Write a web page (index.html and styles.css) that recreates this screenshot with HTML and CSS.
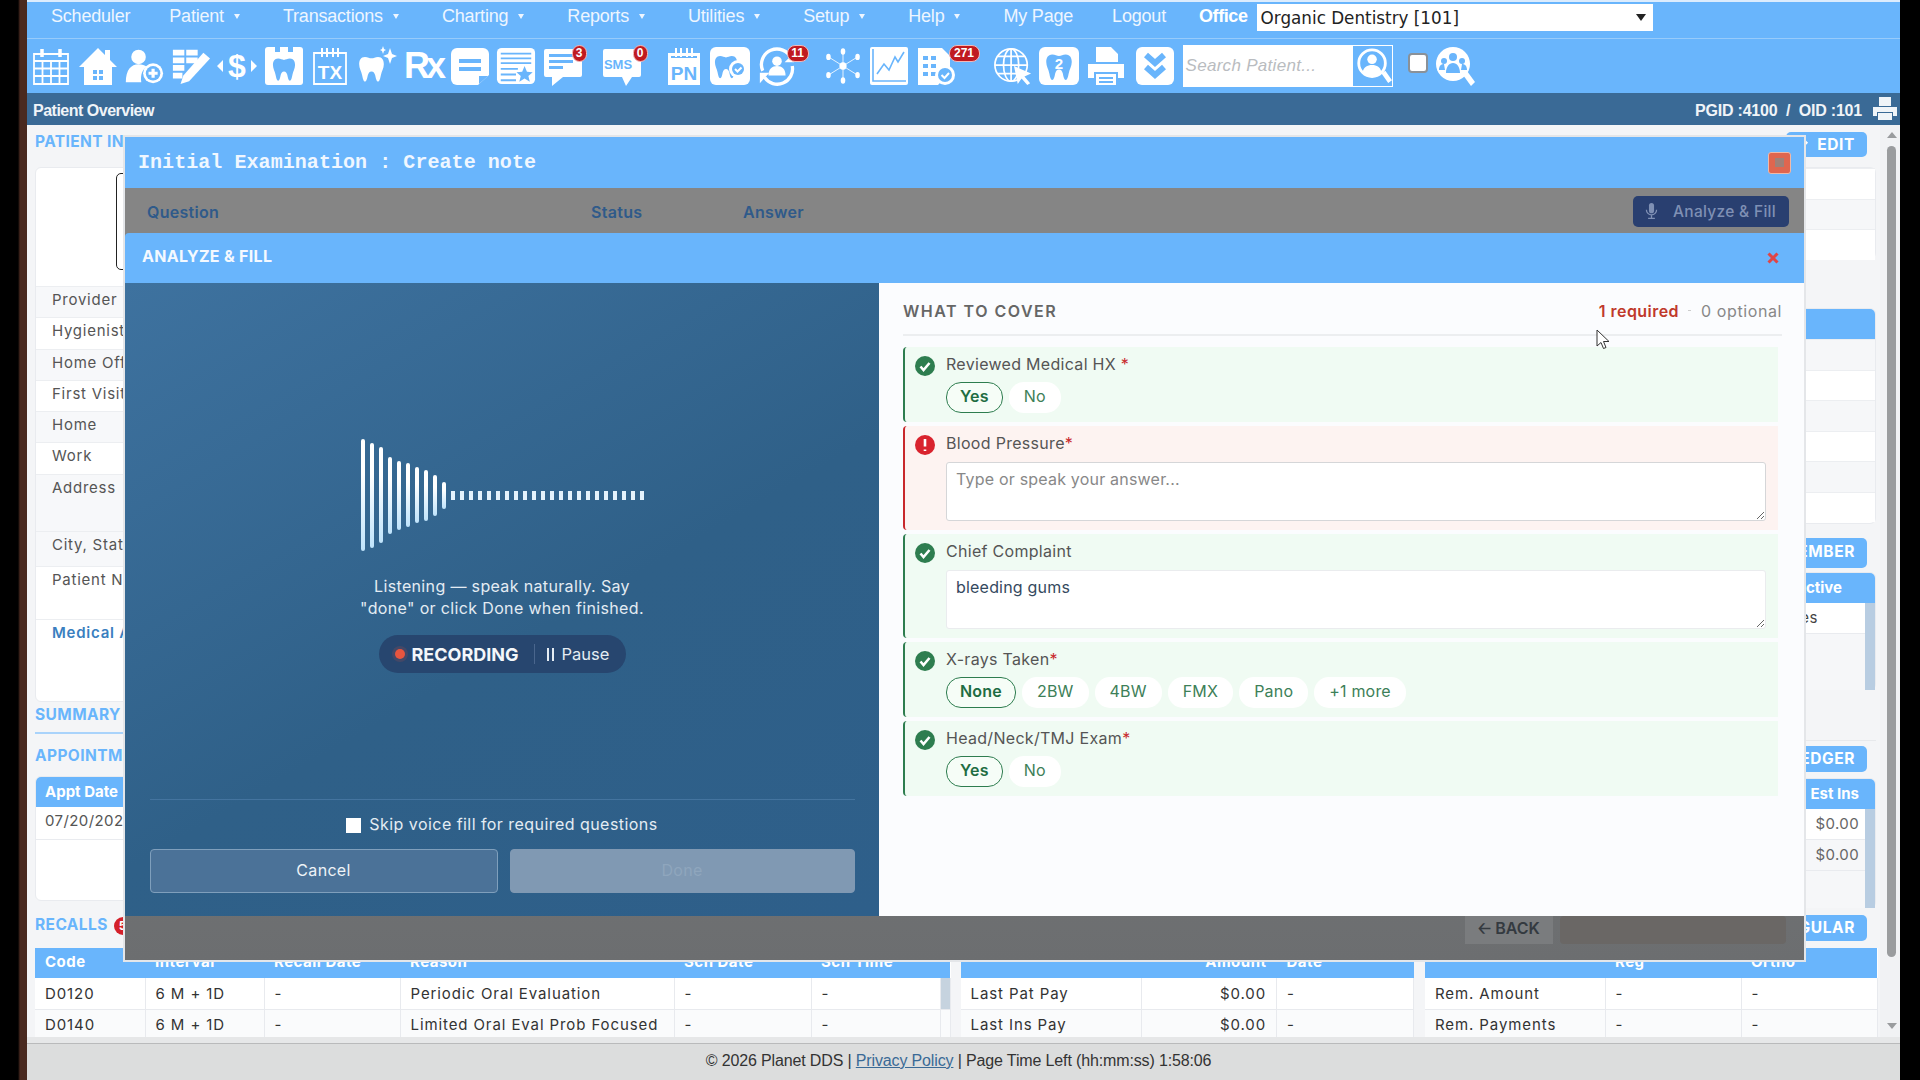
FILE: index.html
```html
<!DOCTYPE html>
<html lang="en">
<head>
    <meta charset="UTF-8">
    <title>Patient Overview</title>
    <link rel="stylesheet" href="styles.css">
</head>
<body>
<svg class="defs" width="0" height="0">
    <symbol id="tooth" viewBox="0 0 40 40"><path d="M11 4c4 0 6 2 9 2s5-2 9-2c6 0 8 5 8 10 0 6-3 9-4 15-1 5-2 9-4 9s-3-4-4-9c-1-3-2-5-5-5s-4 2-5 5c-1 5-2 9-4 9s-3-4-4-9C6 23 3 20 3 14 3 9 5 4 11 4z"/></symbol>
</svg>
<div class="frame">
    <div class="bezel"></div>
    <div class="page">
        <nav class="menu">
            <a class="menu-item">Scheduler</a>
            <a class="menu-item has-caret">Patient</a>
            <a class="menu-item has-caret">Transactions</a>
            <a class="menu-item has-caret">Charting</a>
            <a class="menu-item has-caret">Reports</a>
            <a class="menu-item has-caret">Utilities</a>
            <a class="menu-item has-caret">Setup</a>
            <a class="menu-item has-caret">Help</a>
            <a class="menu-item">My Page</a>
            <a class="menu-item">Logout</a>
            <b class="office-label">Office</b>
            <div class="office-select"><span>Organic Dentistry [101]</span><i class="select-caret"></i></div>
        </nav>

        <div class="toolbar">
            <div class="tool"><svg viewBox="0 0 40 40"><path class="ln" d="M3 8h34v30H3zM3 15h34M3 22.500h34M3 30h34M11.500 15v23M20 15v23M28.500 15v23"/><path class="ln thick" d="M11 3v8M29 3v8"/></svg></div>
            <div class="tool"><svg viewBox="0 0 40 40"><path d="M20 2l7 7V4h5v10l7 7h-5v18H6V21H1z"/><path class="cut" d="M15 24h10v10H15z"/><path class="ln-white" d="M20 24v10M15 29h10"/></svg></div>
            <div class="tool"><svg viewBox="0 0 44 40"><circle cx="16" cy="10" r="8"/><path d="M2 38c0-14 6-20 14-20 4 0 7 1 9 3-5 3-7 8-6 17z"/><circle cx="32" cy="28" r="11"/><circle class="cut" cx="32" cy="28" r="8"/><path class="ln-white thick" d="M32 23v10M27 28h10"/></svg></div>
            <div class="tool"><svg viewBox="0 0 42 40"><path d="M2 3h12v6H2zM16 3h12v6H16zM2 11h12v6H2zM16 11h12v6H16zM2 19h12v6H2zM2 27h10v6H2z"/><path d="M34 6l7 6-22 24-9 3 3-9z"/></svg></div>
            <div class="tool"><svg viewBox="0 0 40 40"><path d="M0 20l6-6v12zM40 20l-6-6v12z"/><text class="svg-bold" x="20" y="31" font-size="32" text-anchor="middle">$</text></svg></div>
            <div class="tool"><svg viewBox="0 0 40 40"><rect x="1" y="1" width="38" height="38" rx="3"/><use class="cut" href="#tooth" x="7" y="8" width="26" height="30"/><path class="cut" d="M11 1h5v5h-5zM24 1h5v5h-5z"/></svg></div>
            <div class="tool"><svg viewBox="0 0 36 40"><path class="ln" d="M2 7h32v31H2z"/><path class="ln-white" d="M10 2v9M15 2v9M21 2v9M26 2v9"/><text class="svg-bold" x="18" y="33" font-size="19" text-anchor="middle">TX</text></svg></div>
            <div class="tool"><svg viewBox="0 0 40 40"><use href="#tooth" x="0" y="6" width="29" height="33"/><path d="M33 2l2 6 5 2-5 2-2 6-2-6-5-2 5-2zM26 0l1 3 2 1-2 1-1 3-1-3-2-1 2-1z"/></svg></div>
            <div class="tool"><svg viewBox="0 0 40 40"><text class="svg-bold" x="1" y="32" font-size="36" letter-spacing="-4">Rx</text></svg></div>
            <div class="tool"><svg viewBox="0 0 40 40"><path d="M7 2h26a6 6 0 0 1 6 6v21L28 39H7a6 6 0 0 1-6-6V8a6 6 0 0 1 6-6z"/><path class="cut" d="M9 13h22v4H9zM9 21h22v4H9zM29 38v-8h9z"/></svg></div>
            <div class="tool"><svg viewBox="0 0 42 40"><rect x="1" y="1" width="40" height="38" rx="5"/><path class="cut" d="M5 6h32v2H5zM5 11h32v2H5zM5 16h32v2H5zM5 22h18v2H5zM5 28h16v2H5zM5 34h16v2H5zM30 20l2.500 6 6 .5-4.500 4 1.500 6-5.500-3.500-5.500 3.500 1.500-6-4.500-4 6-.5z"/></svg></div>
            <div class="tool gap-chat"><svg viewBox="0 0 40 40"><path d="M3 3h34a2 2 0 0 1 2 2v24a2 2 0 0 1-2 2H20l-11 9v-9H3a2 2 0 0 1-2-2V5a2 2 0 0 1 2-2z"/><path class="cut" d="M6 8h24v3H6zM6 14h24v3H6zM6 20h14v3H6z"/></svg><span class="badge">3</span></div>
            <div class="tool gap-sms"><svg viewBox="0 0 40 40"><path d="M3 3h34a2 2 0 0 1 2 2v24a2 2 0 0 1-2 2h-7l-6 9-4-9H3a2 2 0 0 1-2-2V5a2 2 0 0 1 2-2z"/><text class="svg-bold cut" x="16" y="23" font-size="13" text-anchor="middle">SMS</text></svg><span class="badge badge-sms">0</span></div>
            <div class="tool"><svg viewBox="0 0 36 40"><path d="M2 7h32v32H2z"/><path class="cut" d="M5 10h26v2H5z"/><path class="ln-white" d="M10 2v9M15 2v9M21 2v9M26 2v9"/><text class="svg-bold cut" x="18" y="34" font-size="19" text-anchor="middle">PN</text></svg></div>
            <div class="tool"><svg viewBox="0 0 40 40"><rect x="0" y="1" width="40" height="38" rx="6"/><use class="cut" href="#tooth" x="3" y="6" width="26" height="29"/><circle cx="28" cy="23" r="9"/><circle class="cut" cx="28" cy="23" r="6"/><path class="ln-white" d="M25 23l2.500 2.500 4-4"/></svg></div>
            <div class="tool gap-refresh"><svg viewBox="0 0 42 40"><path class="ln thick" d="M6 25A16 16 0 0 1 36 12M37 20a16 16 0 0 1-29 12"/><path d="M39 6v10H29zM3 38V27h10z"/><circle cx="21" cy="15" r="5"/><path d="M12 30c0-7 4-10 9-10s9 3 9 10z"/></svg><span class="badge badge-wide">11</span></div>
            <div class="tool"><svg viewBox="0 0 44 40"><path class="ln hair" d="M22 4v32M6 10l32 20M38 10L6 30"/><circle cx="22" cy="20" r="4"/><g class="node"><ellipse cx="22" cy="4" rx="2.500" ry="3.500"/><ellipse cx="22" cy="36" rx="2.500" ry="3.500"/><ellipse cx="6" cy="10" rx="2.500" ry="3.500"/><ellipse cx="38" cy="10" rx="2.500" ry="3.500"/><ellipse cx="6" cy="30" rx="2.500" ry="3.500"/><ellipse cx="38" cy="30" rx="2.500" ry="3.500"/></g></svg></div>
            <div class="tool"><svg viewBox="0 0 40 40"><rect x="1" y="1" width="38" height="38" rx="2"/><path class="ln-cut" d="M4 3v32h33M8 28l7-10 5 6 6-13 3 5 6-10"/></svg></div>
            <div class="tool gap-doc"><svg viewBox="0 0 40 40"><path d="M2 2h24l8 8v16l-12 13H2z"/><path class="cut" d="M7 10h5v4H7zM15 10h5v4h-5zM7 18h5v4H7zM15 18h5v4h-5zM7 26h5v4H7zM15 26h5v4h-5z"/><circle cx="29" cy="29" r="10"/><circle class="cut" cx="29" cy="29" r="7"/><path class="ln-white" d="M25.500 29l3 3 4.500-5"/></svg><span class="badge badge-271">271</span></div>
            <div class="tool"><svg viewBox="0 0 42 40"><circle class="ln" cx="19" cy="19" r="17"/><ellipse class="ln" cx="19" cy="19" rx="8" ry="17"/><path class="ln" d="M2 19h34M5 10h28M5 28h28M19 2v34"/><path d="M22 20l18 8-7 3 6 7-3 2-6-7-4 6z"/></svg></div>
            <div class="tool"><svg viewBox="0 0 40 40"><rect x="0" y="1" width="40" height="38" rx="6"/><use class="cut" href="#tooth" x="5" y="4" width="30" height="33"/><text class="svg-bold" x="20" y="23" font-size="15" text-anchor="middle">2</text></svg></div>
            <div class="tool gap-printer"><svg viewBox="0 0 40 40"><path d="M10 1h15l7 7v8H10zM2 18h36v14h-6v-6H8v6H2z"/><path d="M10 28h20v11H10z"/><path class="cut" d="M13 31h14v2H13zM13 35h14v2H13z"/></svg></div>
            <div class="tool gap-search"><svg viewBox="0 0 40 40"><rect x="1" y="1" width="38" height="38" rx="6"/><path class="ln-cut heavy" d="M11 9l9 8 9-8M11 21l9 8 9-8"/></svg></div>
            <div class="search-box">
                <span class="search-text">Search Patient...</span>
                <span class="search-btn"><svg viewBox="0 0 40 40"><circle class="ln-white-fat" cx="19" cy="17" r="14"/><circle cx="19" cy="13" r="5"/><path d="M9 27c1-6 5-8 10-8s9 2 10 8a14 14 0 0 1-20 0zM29 28l4-3 7 10-4 3z"/></svg></span>
            </div>
            <span class="tool-check"></span>
            <div class="tool"><svg viewBox="0 0 40 40"><circle cx="18" cy="18" r="17"/><path d="M28 29l4-4 8 11-4 4z"/><circle class="cut" cx="18" cy="11" r="4"/><circle class="cut" cx="9" cy="15" r="3"/><circle class="cut" cx="27" cy="15" r="3"/><path class="cut" d="M11 27c0-6 3-10 7-10s7 4 7 10zM4 24c0-4 2-6 5-6l1 6zM32 24c0-4-2-6-5-6l-1 6z"/></svg></div>
        </div>

        <div class="title-bar">
            <span class="title-left">Patient Overview</span>
            <span class="title-ids">PGID :4100&nbsp; / &nbsp;OID :101</span>
            <svg class="title-print" viewBox="0 0 26 24"><path d="M7 0h12v9H7zM1 10h24v9h-4v-4H5v4H1z"/><path d="M6 16h14v7H6z"/></svg>
        </div>

        <div class="workspace">
            <main class="main">
                <div class="upper">
                    <section class="col-left">
                        <h4 class="section-title first">PATIENT INFORMATION</h4>
                        <div class="card info-card">
                            <div class="photo-area"><div class="photo-box"></div></div>
                            <div class="info-row">Provider</div>
                            <div class="info-row alt">Hygienist</div>
                            <div class="info-row">Home Office</div>
                            <div class="info-row alt">First Visit</div>
                            <div class="info-row">Home</div>
                            <div class="info-row alt">Work</div>
                            <div class="info-row addr">Address</div>
                            <div class="info-row city">City, State</div>
                            <div class="info-row alt notes">Patient Notes</div>
                            <div class="info-row notes blue-label">Medical Alerts</div>
                        </div>
                        <h4 class="section-title summary">SUMMARY</h4>
                        <h4 class="section-title appts">APPOINTMENTS</h4>
                        <div class="card appt-card">
                            <div class="card-head">Appt Date</div>
                            <div class="appt-row">07/20/2025</div>
                        </div>
                        <h4 class="section-title recalls">RECALLS <span class="count-dot">5</span></h4>
                    </section>

                    <section class="col-right">
                        <div class="btn-row"><span class="blue-btn edit-btn"><svg viewBox="0 0 12 12"><path d="M1 11l1-4 6-6 3 3-6 6z"/></svg>EDIT</span></div>
                        <div class="card stripes small-stripes">
                            <div></div><div></div><div></div>
                        </div>
                        <div class="card stripes big-stripes">
                            <div class="card-head"></div>
                            <div></div><div></div><div></div><div></div><div></div><div></div>
                        </div>
                        <div class="btn-row member-row"><span class="blue-btn">ADD MEMBER</span></div>
                        <div class="card active-card">
                            <div class="card-head head-right">Active</div>
                            <div class="scroll-body">
                                <div class="scroll-content"><div class="active-row">Notes</div></div>
                                <div class="mini-scroll"></div>
                            </div>
                        </div>
                        <div class="btn-row ledger-row"><span class="blue-btn ledger-btn">LEDGER</span></div>
                        <div class="card est-card">
                            <div class="card-head head-right short">Est Ins</div>
                            <div class="scroll-body">
                                <div class="scroll-content">
                                    <div class="money-row">$0.00</div>
                                    <div class="money-row alt">$0.00</div>
                                </div>
                                <div class="mini-scroll"></div>
                            </div>
                        </div>
                        <div class="btn-row regular-row"><span class="blue-btn ledger-btn">REGULAR</span></div>
                    </section>
                </div>

                <div class="tables">
                    <table class="data-table recalls-table">
                        <colgroup><col class="c110"><col class="c119"><col class="c136"><col class="c274"><col class="c137"><col class="c129"><col class="c10"></colgroup>
                        <tr><th>Code</th><th>Interval</th><th>Recall Date</th><th>Reason</th><th>Sch Date</th><th>Sch Time</th><th></th></tr>
                        <tr><td>D0120</td><td>6 M + 1D</td><td>-</td><td>Periodic Oral Evaluation</td><td>-</td><td>-</td><td class="scroll-cell"></td></tr>
                        <tr class="alt"><td>D0140</td><td>6 M + 1D</td><td>-</td><td>Limited Oral Eval Prob Focused</td><td>-</td><td>-</td><td class="scroll-cell"></td></tr>
                    </table>
                    <table class="data-table pay-table">
                        <colgroup><col class="c181"><col class="c135"><col class="c137"></colgroup>
                        <tr><th></th><th class="num">Amount</th><th>Date</th></tr>
                        <tr><td>Last Pat Pay</td><td class="num">$0.00</td><td>-</td></tr>
                        <tr class="alt"><td>Last Ins Pay</td><td class="num">$0.00</td><td>-</td></tr>
                    </table>
                    <table class="data-table rem-table">
                        <colgroup><col class="c180"><col class="c136"><col class="c136"></colgroup>
                        <tr><th></th><th>Reg</th><th>Ortho</th></tr>
                        <tr><td>Rem. Amount</td><td>-</td><td>-</td></tr>
                        <tr class="alt"><td>Rem. Payments</td><td>-</td><td>-</td></tr>
                    </table>
                </div>
            </main>
            <div class="page-scroll">
                <span class="arrow-up"></span>
                <span class="page-thumb"></span>
                <span class="arrow-down"></span>
            </div>
        </div>

        <div class="foot-gap"></div>
        <footer class="footer">© 2026 Planet DDS | <a class="footer-link">Privacy Policy</a> | Page Time Left (hh:mm:ss) 1:58:06</footer>

        <!-- note dialog, sits over the overview -->
        <div class="note-modal">
            <div class="note-head">
                <span class="note-title">Initial Examination : Create note</span>
                <span class="note-close"><i></i></span>
            </div>
            <div class="note-band">
                <span class="band-question">Question</span>
                <span class="band-status">Status</span>
                <span class="band-answer">Answer</span>
                <span class="analyze-btn">
                    <svg viewBox="0 0 20 20"><path d="M7 3a3 3 0 0 1 6 0v6a3 3 0 0 1-6 0z"/><path class="mic-line" d="M4 8a6 6 0 0 0 12 0M10 14v4M6 18h8"/></svg>
                    Analyze &amp; Fill
                </span>
            </div>

            <div class="fill-modal">
                <div class="fill-head">
                    <span>ANALYZE &amp; FILL</span>
                    <svg class="fill-close" viewBox="0 0 12 12"><path d="M1.500 1.500l9 9M10.500 1.500l-9 9"/></svg>
                </div>
                <div class="fill-body">
                    <div class="voice-panel">
                        <div class="wave">
                            <i style="height:112px"></i><i style="height:105px"></i><i style="height:96px"></i><i style="height:77px"></i><i style="height:69px"></i><i style="height:64px"></i><i style="height:56px"></i><i style="height:51px"></i><i style="height:41px"></i><i style="height:27px"></i>
                            <i class="dot"></i><i class="dot"></i><i class="dot"></i><i class="dot"></i><i class="dot"></i><i class="dot"></i><i class="dot"></i><i class="dot"></i><i class="dot"></i><i class="dot"></i><i class="dot"></i><i class="dot"></i><i class="dot"></i><i class="dot"></i><i class="dot"></i><i class="dot"></i><i class="dot"></i><i class="dot"></i><i class="dot"></i><i class="dot"></i><i class="dot"></i><i class="dot"></i>
                        </div>
                        <p class="voice-hint">Listening — speak naturally. Say<br>"done" or click Done when finished.</p>
                        <div class="rec-pill">
                            <i class="rec-dot"></i>
                            <b class="rec-label">RECORDING</b>
                            <i class="rec-sep"></i>
                            <i class="pause-icon"></i>
                            <span>Pause</span>
                        </div>
                        <div class="voice-foot">
                            <label class="skip-row"><i class="skip-box"></i>Skip voice fill for required questions</label>
                            <div class="voice-btns">
                                <button class="btn-cancel">Cancel</button>
                                <button class="btn-done">Done</button>
                            </div>
                        </div>
                    </div>

                    <div class="cover-panel">
                        <div class="cover-head">
                            <h3>WHAT TO COVER</h3>
                            <span class="need">1 required</span>
                            <span class="cover-sep"></span>
                            <span class="opt">0 optional</span>
                        </div>

                        <div class="q-item">
                            <svg class="q-icon ok" viewBox="0 0 20 20"><circle cx="10" cy="10" r="10"/><path d="M5.500 10.500l3 3.500 6-7"/></svg>
                            <div class="q-main">
                                <div class="q-label">Reviewed Medical HX <em>*</em></div>
                                <div class="pills"><span class="pill on">Yes</span><span class="pill">No</span></div>
                            </div>
                        </div>
                        <div class="q-item bad">
                            <svg class="q-icon err" viewBox="0 0 20 20"><circle cx="10" cy="10" r="10"/><path d="M10 4v7.500M10 14.500v1.500"/></svg>
                            <div class="q-main">
                                <div class="q-label">Blood Pressure<em>*</em></div>
                                <textarea class="q-text bad-text" placeholder="Type or speak your answer..."></textarea>
                            </div>
                        </div>
                        <div class="q-item">
                            <svg class="q-icon ok" viewBox="0 0 20 20"><circle cx="10" cy="10" r="10"/><path d="M5.500 10.500l3 3.500 6-7"/></svg>
                            <div class="q-main">
                                <div class="q-label">Chief Complaint</div>
                                <textarea class="q-text">bleeding gums</textarea>
                            </div>
                        </div>
                        <div class="q-item">
                            <svg class="q-icon ok" viewBox="0 0 20 20"><circle cx="10" cy="10" r="10"/><path d="M5.500 10.500l3 3.500 6-7"/></svg>
                            <div class="q-main">
                                <div class="q-label">X-rays Taken<em>*</em></div>
                                <div class="pills"><span class="pill on">None</span><span class="pill">2BW</span><span class="pill">4BW</span><span class="pill">FMX</span><span class="pill">Pano</span><span class="pill">+1 more</span></div>
                            </div>
                        </div>
                        <div class="q-item">
                            <svg class="q-icon ok" viewBox="0 0 20 20"><circle cx="10" cy="10" r="10"/><path d="M5.500 10.500l3 3.500 6-7"/></svg>
                            <div class="q-main">
                                <div class="q-label">Head/Neck/TMJ Exam<em>*</em></div>
                                <div class="pills"><span class="pill on">Yes</span><span class="pill">No</span></div>
                            </div>
                        </div>
                    </div>
                </div>
            </div>

            <div class="note-foot">
                <span class="back-btn">🡠 BACK</span>
                <span class="complete-btn"></span>
            </div>

            <svg class="cursor" viewBox="0 0 14 21"><path d="M1 1v16l4-3.500 2.500 6 2.500-1-2.500-6H13z"/></svg>
        </div>
    </div>
</div>
</body>
</html>
```

FILE: styles.css
```css
* {
    box-sizing: border-box;
}
html, body {
    margin: 0;
    padding: 0;
    height: 1080px;
    overflow: hidden;
    background: #000;
}
body {
    font-family: Inter, "Open Sans", sans-serif;
    color: #444;
}
.defs {
    position: absolute;
}
.frame {
    display: flex;
    height: 1080px;
}
.bezel {
    width: 27px;
    background: linear-gradient(to right, #000 18px, #4a2a20 20px, #4a2a20 27px);
}
.page {
    position: relative;
    width: 1873px;
    height: 1080px;
    overflow: hidden;
    background: #f4f5f7;
}

/* top menu */
.menu {
    display: flex;
    align-items: center;
    height: 39px;
    padding: 0 0 0 24px;
    background: #69b5fc;
    border-top: 2px solid #dcecfd;
    border-bottom: 1px solid #97cbfb;
    font-family: "Liberation Sans", Arial, sans-serif;
}
.menu-item {
    margin-right: 39px;
    padding-bottom: 8px;
    font-size: 18px;
    color: #eef6ff;
    letter-spacing: -0.2px;
}
.has-caret {
    margin-right: 43px;
}
.has-caret::after {
    content: "";
    display: inline-block;
    margin-left: 10px;
    vertical-align: 3px;
    border-left: 3px solid transparent;
    border-right: 3px solid transparent;
    border-top: 5px solid #eef6ff;
}
.office-label {
    margin-left: -6px;
    margin-right: 9px;
    padding-bottom: 8px;
    font-size: 18px;
    color: #fff;
    letter-spacing: -0.4px;
}
.office-select {
    display: flex;
    align-items: center;
    justify-content: space-between;
    width: 396px;
    height: 27px;
    margin-bottom: 5px;
    padding: 0 7px 0 4px;
    background: #fff;
    font-family: "DejaVu Sans", sans-serif;
    font-size: 16.800px;
    color: #222;
}
.select-caret {
    border-left: 5px solid transparent;
    border-right: 5px solid transparent;
    border-top: 7px solid #222;
}

/* icon toolbar */
.toolbar {
    display: flex;
    align-items: center;
    height: 54px;
    padding-left: 4px;
    background: #69b5fc;
}
.tool {
    position: relative;
    flex: none;
    width: 40px;
    height: 40px;
    margin-right: 6.500px;
}
.tool svg {
    display: block;
    width: 40px;
    height: 40px;
    fill: #fff;
    overflow: visible;
}
.cut {
    fill: #69b5fc;
}
.ln {
    fill: none;
    stroke: #fff;
    stroke-width: 1.800;
}
.hair {
    stroke-width: 0.900;
}
.ln-white {
    fill: none;
    stroke: #fff;
    stroke-width: 2;
}
.ln-cut {
    fill: none;
    stroke: #69b5fc;
    stroke-width: 1.600;
}
.heavy {
    stroke-width: 6;
}
.thick {
    stroke-width: 3.500;
}
.ln-white-fat {
    fill: none;
    stroke: #fff;
    stroke-width: 3;
}
.svg-bold {
    font-family: "Liberation Sans", Arial, sans-serif;
    font-weight: bold;
}
.gap-chat {
    margin-right: 19px;
}
.gap-sms {
    margin-right: 22px;
}
.gap-refresh {
    margin-right: 26px;
}
.gap-doc {
    margin-right: 37px;
}
.gap-printer {
    margin-right: 9px;
}
.gap-search {
    margin-right: 8px;
}
.badge {
    position: absolute;
    top: -1px;
    right: -4px;
    min-width: 15px;
    height: 17px;
    padding: 0 2px;
    border-radius: 8px;
    background: #c01a20;
    border: 1px solid #f2b8b8;
    font-family: "Liberation Sans", Arial, sans-serif;
    font-size: 12px;
    font-weight: bold;
    line-height: 15px;
    text-align: center;
    color: #fff;
}
.badge-sms {
    right: -6px;
}
.badge-wide {
    right: -12px;
    min-width: 22px;
}
.badge-271 {
    right: -24px;
    min-width: 31px;
}
.search-box {
    display: flex;
    flex: none;
    justify-content: space-between;
    align-items: center;
    width: 210px;
    height: 42px;
    padding-left: 3px;
    background: #fff;
}
.search-text {
    font-family: "Liberation Sans", Arial, sans-serif;
    font-size: 17px;
    font-style: italic;
    color: #b9bcc0;
    letter-spacing: 0.3px;
}
.search-btn {
    width: 41px;
    height: 42px;
    background: #69b5fc;
    border: 1px solid #fff;
    padding: 1px;
}
.search-btn svg {
    display: block;
    width: 38px;
    height: 38px;
    fill: #fff;
}
.tool-check {
    flex: none;
    width: 20px;
    height: 20px;
    margin: 0 7px 6px 15px;
    background: #fff;
    border: 2px solid #8a9198;
    border-radius: 4px;
}

/* dark title bar */
.title-bar {
    display: flex;
    align-items: center;
    height: 32px;
    padding: 3px 0 0 6px;
    background: #3a6a96;
    font-family: "Liberation Sans", Arial, sans-serif;
    font-size: 16px;
    font-weight: bold;
    color: #f0f4f8;
}
.title-left {
    letter-spacing: -0.5px;
}
.title-ids {
    margin-left: auto;
    letter-spacing: -0.2px;
}
.title-print {
    width: 26px;
    height: 24px;
    margin: -3px 2px 0 10px;
    fill: #f0f4f8;
}

/* overview behind the dialog */
.workspace {
    display: flex;
    height: 912px;
}
.main {
    width: 1853px;
    height: 912px;
    padding: 0 4px 0 8px;
    overflow: hidden;
}
.upper {
    display: flex;
    justify-content: space-between;
    height: 823px;
}
.col-left {
    width: 420px;
}
.col-right {
    width: 300px;
}
.section-title {
    margin: 0;
    font-size: 15.500px;
    font-weight: 700;
    line-height: 24px;
    color: #69b5fc;
    letter-spacing: 0.4px;
}
.first {
    padding-top: 5px;
    height: 42px;
}
.card {
    background: #fff;
    border: 1px solid #e9ebef;
    border-radius: 6px;
}
.info-card {
    height: 535px;
}
.photo-area {
    height: 118px;
    padding: 5px 0 0 80px;
}
.photo-box {
    width: 200px;
    height: 97px;
    border: 1px solid #222;
    border-radius: 5px;
}
.info-row {
    height: 31.300px;
    padding-left: 16px;
    border-top: 1px solid #eceef1;
    font-size: 15px;
    line-height: 25px;
    letter-spacing: 0.75px;
    color: #555;
    background: #f7f8fa;
}
.info-row.alt {
    background: #fff;
}
.info-row.addr {
    height: 57px;
}
.info-row.city {
    height: 35px;
}
.info-row.notes {
    height: 53px;
}
.blue-label {
    font-weight: 600;
    color: #3a7fc0;
    background: #fff;
}
.summary {
    height: 31px;
    line-height: 24px;
    border-bottom: 2px solid #a9d3fb;
    padding-bottom: 5px;
    margin-top: 1px;
}
.appts {
    margin-top: 10px;
    height: 25px;
    margin-bottom: 7px;
}
.appt-card {
    height: 125px;
}
.card-head {
    height: 30px;
    padding-left: 9px;
    background: #69b5fc;
    border-radius: 5px 5px 0 0;
    font-size: 15px;
    font-weight: 700;
    line-height: 29px;
    color: #fff;
}
.appt-row {
    height: 33px;
    padding-left: 9px;
    font-size: 15px;
    line-height: 28px;
    letter-spacing: 0.4px;
    color: #555;
    border-bottom: 1px solid #e9ebef;
}
.recalls {
    margin-top: 12px;
}
.count-dot {
    display: inline-block;
    width: 18px;
    height: 18px;
    margin-left: 2px;
    border-radius: 50%;
    background: #d4202a;
    font-size: 12px;
    line-height: 18px;
    text-align: center;
    color: #fff;
}

.btn-row {
    display: flex;
    justify-content: flex-end;
    padding-right: 9px;
}
.btn-row:first-child {
    height: 42px;
    padding-top: 7px;
}
.blue-btn {
    height: 25px;
    padding: 0 12px;
    background: #69b5fc;
    border-radius: 5px;
    font-size: 15.500px;
    font-weight: 700;
    line-height: 24px;
    letter-spacing: 0.6px;
    color: #fff;
}
.edit-btn {
    display: flex;
    align-items: center;
    gap: 8px;
    padding-left: 12px;
}
.edit-btn svg {
    width: 11px;
    height: 11px;
    fill: #fff;
}
.stripes > div:not(.card-head) {
    height: 30.500px;
    background: #fff;
    border-top: 1px solid #eceef1;
}
.stripes > div:nth-child(even):not(.card-head) {
    background: #f6f7f9;
}
.small-stripes {
    height: 92px;
    border-bottom: 1px solid #e9ebef;
}
.big-stripes {
    height: 216px;
    margin-top: 49px;
}
.member-row {
    height: 30px;
    margin-top: 14px;
}
.member-row .blue-btn {
    height: 30px;
    line-height: 28px;
}
.active-card {
    height: 118px;
    margin-top: 4px;
}
.head-right {
    padding: 0 33px 0 0;
    text-align: right;
}
.head-right.short {
    padding-right: 16px;
}
.scroll-body {
    display: flex;
    height: 87px;
}
.scroll-content {
    flex: 1;
    background: #f6f7f9;
}
.mini-scroll {
    width: 10px;
    background: #b8cde2;
}
.active-row {
    height: 31px;
    padding-right: 47px;
    background: #fff;
    border-bottom: 1px solid #e9ebef;
    font-size: 15px;
    line-height: 29px;
    letter-spacing: 0.5px;
    text-align: right;
    color: #444;
}
.ledger-row {
    margin-top: 50px;
    border-top: 1px solid #e7e9ec;
    height: 37px;
    align-items: flex-end;
    padding-bottom: 5px;
}
.ledger-btn {
    height: 26px;
    line-height: 26px;
}
.est-card {
    height: 130px;
    margin-top: 1px;
}
.est-card .scroll-body {
    height: 99px;
}
.money-row {
    height: 31px;
    padding-right: 6px;
    background: #fff;
    border-bottom: 1px solid #e9ebef;
    font-size: 15px;
    line-height: 29px;
    letter-spacing: 0.4px;
    text-align: right;
    color: #666;
}
.money-row.alt {
    background: #f6f7f9;
}
.regular-row {
    margin-top: 7px;
}

/* bottom tables */
.tables {
    display: flex;
    gap: 10px;
}
.data-table {
    table-layout: fixed;
    border-collapse: collapse;
    background: #fff;
    font-size: 15px;
    letter-spacing: 0.9px;
    color: #333;
}
.recalls-table {
    width: 915px;
}
.pay-table {
    width: 453px;
}
.rem-table {
    width: 452px;
    margin-left: 1px;
}
.c10 { width: 10px; }
.c110 { width: 110px; }
.c119 { width: 119px; }
.c129 { width: 129px; }
.c135 { width: 135px; }
.c136 { width: 136px; }
.c137 { width: 137px; }
.c180 { width: 180px; }
.c181 { width: 181px; }
.c274 { width: 274px; }
.data-table th {
    height: 30px;
    padding: 0 10px 4px;
    background: #69b5fc;
    font-weight: 700;
    text-align: left;
    letter-spacing: 0.5px;
    color: #fff;
}
.data-table td {
    height: 31px;
    padding: 0 10px;
    border-right: 1px solid #e8eaee;
    border-bottom: 1px solid #e8eaee;
    white-space: nowrap;
}
.data-table .alt td {
    background: #fafbfc;
}
.data-table .num {
    text-align: right;
}
.data-table .scroll-cell {
    padding: 0;
    background: #c6d3df;
}

.page-scroll {
    position: relative;
    width: 20px;
    background: #f1f2f4;
}
.page-thumb {
    position: absolute;
    left: 7px;
    top: 21px;
    width: 9px;
    height: 811px;
    border-radius: 5px;
    background: #9a9c9e;
}
.arrow-up {
    position: absolute;
    left: 7px;
    top: 7px;
    border-left: 5px solid transparent;
    border-right: 5px solid transparent;
    border-bottom: 6px solid #9a9c9e;
}
.arrow-down {
    position: absolute;
    left: 7px;
    bottom: 8px;
    border-left: 5px solid transparent;
    border-right: 5px solid transparent;
    border-top: 6px solid #9a9c9e;
}
.foot-gap {
    height: 7px;
    background: #e6e7e8;
    border-bottom: 1px solid #b9babb;
}
.footer {
    height: 36px;
    padding-right: 10px;
    background: #dcdddd;
    font-family: "Liberation Sans", Arial, sans-serif;
    font-size: 16px;
    line-height: 34px;
    letter-spacing: -0.14px;
    text-align: center;
    color: #333;
}
.footer-link {
    color: #3a6a96;
    text-decoration: underline;
}

/* note dialog */
.note-modal {
    position: absolute;
    left: 96px;
    top: 135px;
    width: 1683px;
    height: 827px;
    border: 2px solid #e4e6e9;
    background: linear-gradient(to bottom, #868686, #6c6e70);
}
.note-head {
    display: flex;
    align-items: center;
    justify-content: space-between;
    height: 51px;
    padding: 0 13px 0 13px;
    background: #69b5fc;
}
.note-title {
    font-family: "Liberation Mono", monospace;
    font-size: 20px;
    font-weight: bold;
    letter-spacing: 0.06px;
    color: #f0f7ff;
}
.note-close {
    display: flex;
    align-items: center;
    justify-content: center;
    width: 23px;
    height: 22px;
    background: #e0664f;
    border: 1px solid #f0b9a8;
    border-radius: 3px;
}
.note-close i {
    width: 9px;
    height: 9px;
    background: #a08078;
}
.note-band {
    position: relative;
    display: flex;
    align-items: center;
    height: 45px;
    padding: 2px 0 0 22px;
    background: #858585;
    font-size: 16px;
    font-weight: 600;
    color: #2f5a8a;
    letter-spacing: 0.3px;
}
.band-question {
    width: 444px;
}
.band-status {
    width: 152px;
}
.analyze-btn {
    display: flex;
    align-items: center;
    gap: 13px;
    height: 31px;
    margin-left: auto;
    margin-right: 15px;
    padding: 0 8px 0 10px;
    width: 156px;
    background: #293f70;
    border-radius: 5px;
    font-size: 15.500px;
    font-weight: 500;
    white-space: nowrap;
    color: #7f90b4;
}
.analyze-btn svg {
    flex: none;
    width: 17px;
    height: 17px;
    fill: #7f90b4;
}
.mic-line {
    fill: none;
    stroke: #7f90b4;
    stroke-width: 1.500;
}

.fill-modal {
    height: 683px;
}
.fill-head {
    display: flex;
    align-items: center;
    justify-content: space-between;
    height: 50px;
    padding: 0 25px 4px 17px;
    background: #69b5fc;
    border-radius: 4px 0 0 0;
    font-size: 16px;
    font-weight: 700;
    letter-spacing: 0.3px;
    color: #f4f9ff;
}
.fill-close {
    width: 12px;
    height: 12px;
    margin-top: 4px;
    fill: none;
    stroke: #e04545;
    stroke-width: 3;
}
.fill-body {
    display: flex;
    height: 633px;
}
.voice-panel {
    display: flex;
    flex-direction: column;
    align-items: center;
    width: 754px;
    padding-top: 156px;
    background: linear-gradient(150deg, #3e729f 0%, #2f6088 55%, #2e5f8a 100%);
}
.wave {
    display: flex;
    align-items: center;
    gap: 5px;
    height: 112px;
}
.wave i {
    width: 4px;
    border-radius: 2px;
    background: linear-gradient(to bottom, #fff 30%, #bfe3fb);
}
.wave .dot {
    height: 9px;
    border-radius: 0;
    background: #e4f2fc;
}
.voice-hint {
    margin: 24px 0 0;
    font-size: 16px;
    line-height: 22px;
    letter-spacing: 0.35px;
    text-align: center;
    color: #e4ecf3;
}
.rec-pill {
    display: flex;
    align-items: center;
    width: 247px;
    height: 38px;
    margin-top: 16px;
    padding-left: 16px;
    background: #27466f;
    border-radius: 19px;
    font-size: 16.500px;
    color: #e4ecf3;
}
.rec-dot {
    width: 10px;
    height: 10px;
    margin-right: 7px;
    border-radius: 50%;
    background: #e8553f;
    box-shadow: 0 0 0 3px rgba(232, 85, 63, 0.15);
}
.rec-label {
    width: 121px;
    font-size: 18px;
    font-weight: 700;
    color: #f4f7fa;
    white-space: nowrap;
}
.rec-sep {
    width: 1px;
    height: 20px;
    margin: 0 12px 0 1px;
    background: #4a668d;
}
.pause-icon {
    width: 7px;
    height: 13px;
    margin-right: 8px;
    border-left: 2px solid #e4ecf3;
    border-right: 2px solid #e4ecf3;
}
.voice-foot {
    width: 705px;
    margin-top: auto;
    padding-bottom: 23px;
    border-top: 1px solid #44749f;
}
.skip-row {
    display: flex;
    align-items: center;
    justify-content: center;
    height: 24px;
    margin: 12px 0 13px;
    font-size: 16px;
    letter-spacing: 0.45px;
    color: #e4ecf3;
}
.skip-box {
    width: 15px;
    height: 15px;
    margin: 3px 8px 0 0;
    background: #fff;
}
.voice-btns {
    display: flex;
    justify-content: space-between;
}
.voice-btns button {
    height: 44px;
    padding: 0 0 2px;
    border-radius: 4px;
    font-family: inherit;
    font-size: 16px;
    letter-spacing: 0.3px;
}
.btn-cancel {
    width: 348px;
    background: #4b7298;
    border: 1px solid #7f9fbc;
    color: #eef3f7;
}
.btn-done {
    width: 345px;
    background: #8099b3;
    border: 1px solid #8099b3;
    color: #8fa6bd;
}

.cover-panel {
    flex: 1;
    padding: 14px 22px 0 24px;
    background: #fbfcfe;
}
.cover-head {
    display: flex;
    align-items: center;
    height: 39px;
    margin-bottom: 11px;
    padding-bottom: 10px;
    border-bottom: 2px solid #eceef0;
    font-size: 16px;
    letter-spacing: 0.45px;
}
.cover-head h3 {
    margin: 0 auto 0 0;
    font-size: 16px;
    font-weight: 600;
    letter-spacing: 1.5px;
    color: #666;
}
.need {
    font-weight: 600;
    color: #c0392b;
}
.cover-sep {
    width: 3px;
    height: 1px;
    margin: 0 10px 0 9px;
    background: #ccc;
}
.opt {
    letter-spacing: 0.6px;
    color: #888;
}
.q-item {
    display: flex;
    gap: 11px;
    margin: 0 4px 4px 0;
    padding: 6px 12px 9px 10px;
    background: #f0fbf3;
    border-left: 2px solid #2e7d4f;
    border-radius: 4px 0 0 4px;
}
.q-item.bad {
    background: #fdf3f1;
    border-left-color: #c8282c;
}
.q-icon {
    flex: none;
    width: 20px;
    height: 20px;
    margin-top: 3px;
    stroke: #fff;
    fill: none;
}
.q-icon circle {
    stroke: none;
}
.q-icon path {
    fill: none;
    stroke: #fff;
    stroke-width: 2.600;
}
.q-icon.ok circle {
    fill: #2e7d4f;
}
.q-icon.err circle {
    fill: #d9232e;
}
.q-main {
    flex: 1;
}
.q-label {
    height: 22px;
    font-size: 16px;
    line-height: 22px;
    letter-spacing: 0.3px;
    color: #555;
}
.q-label em {
    font-style: normal;
    color: #c8282c;
}
.pills {
    display: flex;
    gap: 6px;
    margin-top: 7px;
}
.pill {
    height: 31px;
    padding: 0 15px;
    background: #fff;
    border-radius: 15px;
    font-size: 16px;
    line-height: 28px;
    letter-spacing: 0.2px;
    color: #3d8058;
}
.pill.on {
    padding: 0 13px;
    border: 1.500px solid #2e7d4f;
    background: #f6fdf7;
    font-weight: 600;
    line-height: 26px;
    color: #1f6d43;
}
.q-text {
    display: block;
    width: 100%;
    height: 59px;
    margin-top: 8px;
    padding: 6px 9px;
    background: #fff;
    border: 1px solid #eaecee;
    border-radius: 3px;
    outline: none;
    font-family: inherit;
    font-size: 16px;
    letter-spacing: 0.2px;
    color: #34495e;
}
.bad-text {
    border-color: #d5d6d8;
}
.q-text::placeholder {
    color: #888;
}
.note-foot {
    display: flex;
    justify-content: flex-end;
    gap: 7px;
    height: 44px;
    padding-right: 18px;
}
.back-btn {
    width: 88px;
    height: 28px;
    background: #7a7c7e;
    font-size: 16px;
    font-weight: 600;
    line-height: 24px;
    text-align: center;
    color: #343a40;
}
.complete-btn {
    width: 226px;
    height: 28px;
    border-radius: 4px;
    background: #6a6765;
}
.cursor {
    position: absolute;
    left: 1471px;
    top: 192px;
    width: 14px;
    height: 21px;
    fill: #fff;
    stroke: #333;
    stroke-width: 1;
}
```
